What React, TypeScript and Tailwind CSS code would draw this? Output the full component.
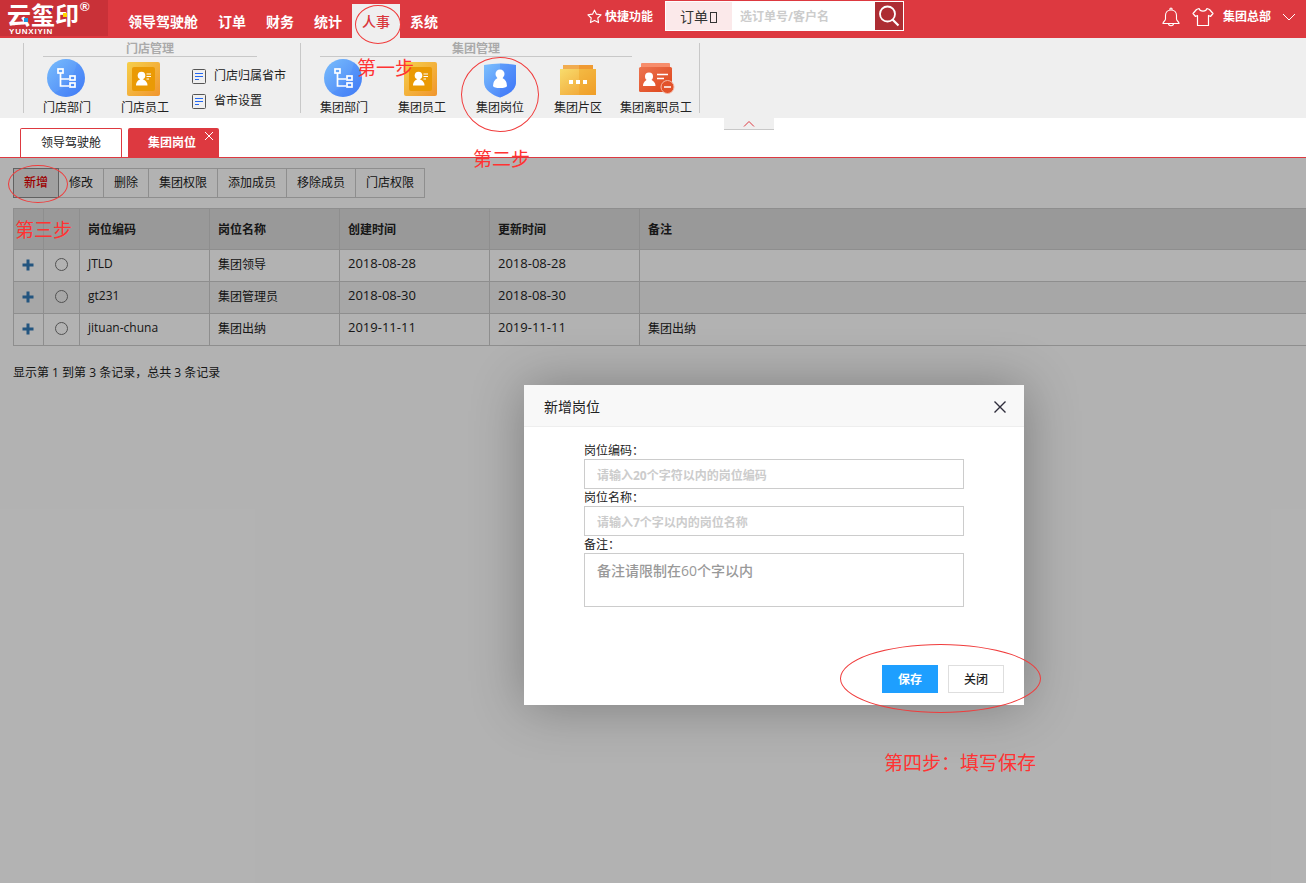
import { useState, type ReactNode } from "react";

const navItems = ["领导驾驶舱", "订单", "财务", "统计", "人事", "系统"];

const tools = [
  "新增",
  "修改",
  "删除",
  "集团权限",
  "添加成员",
  "移除成员",
  "门店权限",
];

const rows = [
  { code: "JTLD", name: "集团领导", created: "2018-08-28", updated: "2018-08-28", remark: "" },
  { code: "gt231", name: "集团管理员", created: "2018-08-30", updated: "2018-08-30", remark: "" },
  { code: "jituan-chuna", name: "集团出纳", created: "2019-11-11", updated: "2019-11-11", remark: "集团出纳" },
];

// hand-drawn tutorial marks that float above the page
const circles = [
  "left-[355px] top-[5px] h-[39px] w-[46px]",
  "left-[461px] top-[57px] h-[75px] w-[78px]",
  "left-[8px] top-[165px] h-[38px] w-[60px]",
  "left-[840px] top-[644px] h-[69px] w-[201px]",
];

const steps = [
  { text: "第一步", place: "left-[357px] top-[54px]" },
  { text: "第二步", place: "left-[473px] top-[145px]" },
  { text: "第三步", place: "left-[15px] top-[216px]" },
  { text: "第四步：填写保存", place: "left-[884px] top-[749px]" },
];

function Logo() {
  return (
    <svg viewBox="0 0 108 36" className="h-9 w-[108px] overflow-visible bg-[#c93138]" role="img" aria-label="云玺印">
      <g fill="#fff" fontFamily="'Noto Sans CJK SC', sans-serif">
        <text x="7" y="24" fontSize="24" fontWeight="700">云玺印</text>
        <text x="9" y="34" fontSize="8" fontWeight="700" fontFamily="'Liberation Sans', sans-serif" className="tracking-widest">
          YUNXIYIN
        </text>
        <text x="80" y="11" fontSize="13" fontWeight="700" fontFamily="'Liberation Sans', sans-serif">®</text>
      </g>
      <rect x="24" y="18" width="4" height="4" fill="#1a9be0" />
      <rect x="49" y="8" width="3" height="3" fill="#7d1f8c" />
      <rect x="63" y="13" width="4" height="4" fill="#ffd400" />
    </svg>
  );
}

function DeptIcon() {
  return (
    <svg viewBox="0 0 40 40" className="size-10" fill="none">
      <defs>
        <linearGradient id="dept" x1="0" y1="0" x2="1" y2="1">
          <stop offset="0" stopColor="#79bdfc" />
          <stop offset="1" stopColor="#437df6" />
        </linearGradient>
      </defs>
      <circle cx="20" cy="20" r="19" fill="url(#dept)" />
      <path d="M31 4.500A19 19 0 0 1 8 35C20 30 28 19 31 4.500Z" fill="#2f6bf5" opacity=".15" />
      <g stroke="#fff" strokeWidth="1.700">
        <rect x="12" y="11" width="5" height="4" />
        <path d="M14.500 15v13H23M14.500 21H23" />
        <rect x="24" y="18" width="5" height="4" />
        <rect x="24" y="25" width="5" height="4" />
      </g>
    </svg>
  );
}

function StaffIcon() {
  return (
    <svg viewBox="0 0 40 40" className="size-10">
      <defs>
        <linearGradient id="staff" x1="0" y1="0" x2="1" y2="1">
          <stop offset="0" stopColor="#f6cf4a" />
          <stop offset="1" stopColor="#f0952e" />
        </linearGradient>
      </defs>
      <rect x="3" y="4" width="33" height="34" rx="2" fill="url(#staff)" />
      <rect x="8" y="9" width="23" height="24" rx="2" fill="#ea9a05" />
      <circle cx="17.500" cy="17.500" r="3.800" fill="#fff" />
      <path d="M12 27.500c0-4 2.500-5.500 5.500-7 3 1.500 6 3 6 7Z" fill="#fff" />
      <path d="M22.500 16H27M22.500 18.500H27M22.500 21H25" stroke="#fff" />
    </svg>
  );
}

function PostIcon() {
  return (
    <svg viewBox="-1 0 40 40" className="size-10">
      <defs>
        <linearGradient id="post" x1="0" y1="0" x2="1" y2="1">
          <stop offset="0" stopColor="#7cc0fd" />
          <stop offset="1" stopColor="#3f76f8" />
        </linearGradient>
      </defs>
      <path d="M4 7Q20 4 36 7V24C36 32 28 37 20 39.500 12 37 4 32 4 24Z" fill="url(#post)" />
      <path d="M20 5.500Q29 5.500 36 7V24C36 32 28 37 20 39.500Z" fill="#3b74f7" opacity=".3" />
      <circle cx="20" cy="16" r="4.500" fill="#fff" />
      <path d="M13 28q0-5.500 4.500-8h5q4.500 2.500 4.500 8-1 2-7 2t-7-2Z" fill="#fff" />
    </svg>
  );
}

function AreaIcon() {
  return (
    <svg viewBox="-1 0 40 40" className="size-10">
      <defs>
        <linearGradient id="area" x1="0" y1="0" x2="1" y2="1">
          <stop offset="0" stopColor="#f8dc6c" />
          <stop offset="1" stopColor="#f09c2c" />
        </linearGradient>
      </defs>
      <path d="M5 7H35V12H5Z" fill="#f1ac50" />
      <path d="M21 7H35V12H21Z" fill="#f09b33" />
      <path d="M2 11H38V37H2Z" fill="url(#area)" />
      <path d="M21 11H38V37H21Z" fill="#f0a020" opacity=".4" />
      <path d="M11 22h4v4h-4zM18 22h4v4h-4zM25 22h4v4h-4z" fill="#fff" />
    </svg>
  );
}

function LeftStaffIcon() {
  return (
    <svg viewBox="-1 0 40 40" className="size-10">
      <defs>
        <linearGradient id="leaver" x1="0" y1="0" x2="1" y2="1">
          <stop offset="0" stopColor="#ec7450" />
          <stop offset="1" stopColor="#de4318" />
        </linearGradient>
      </defs>
      <rect x="5" y="5" width="29" height="8" rx="1" fill="#f78d6b" />
      <rect x="3" y="9" width="33" height="25" rx="1.500" fill="url(#leaver)" />
      <circle cx="13" cy="18.500" r="4" fill="#fff" />
      <path d="M7 28c0-4 3-6 6-7.500 3 1.500 6.500 3.500 6.500 7.500Z" fill="#fff" />
      <path d="M21 16.500H32M21 20.500H28" stroke="#fff" strokeWidth="1.500" />
      <circle cx="31.500" cy="29" r="6.500" fill="#e2522a" stroke="#f5b8a5" />
      <path d="M28 29H35" stroke="#fff" strokeWidth="1.500" />
    </svg>
  );
}

function ListIcon() {
  return (
    <svg viewBox="0 0 14 15" className="h-[15px] w-[14px]" fill="none">
      <rect x=".5" y=".5" width="13" height="14" rx="1" stroke="#555" />
      <path d="M3 4.500H11M3 7.500H11M3 10.500H7" stroke="#2468f2" />
    </svg>
  );
}

function RibbonGroup({
  title,
  rule,
  children,
}: {
  title: string;
  rule: string;
  children: ReactNode;
}) {
  return (
    <section className="h-[70px] border-l border-[#c8c8c8]">
      <h2 className={`ml-[19px] h-[14px] border-b border-[#c8c8c8] text-center text-xs leading-[12px] font-bold text-[#aaa] ${rule}`}>
        {title}
      </h2>
      <div className="ml-1 flex">{children}</div>
    </section>
  );
}

function RibbonItem({ label, icon }: { label: string; icon: ReactNode }) {
  return (
    <a href="#" className="flex w-[78px] flex-col items-center whitespace-nowrap">
      <span className="mt-px pr-[2px]">{icon}</span>
      <span className="leading-5">{label}</span>
    </a>
  );
}

function Header() {
  return (
    <header className="flex h-[38px] bg-[#dd3940] font-bold text-white">
      <Logo />

      <nav className="ml-[10px] flex pt-1 text-sm">
        {navItems.map((item) => (
          <a
            key={item}
            href="#"
            className={`px-[10px] leading-9 whitespace-nowrap ${
              item === "人事" ? "bg-[#efefef] font-medium text-[#d9363c]" : ""
            }`}
          >
            {item}
          </a>
        ))}
      </nav>

      <button className="ml-[139px] flex h-[33px] items-center gap-[3px] whitespace-nowrap">
        <svg viewBox="0 0 16 16" className="size-[15px]" fill="none" stroke="#fff" strokeWidth="1.200" strokeLinejoin="round">
          <path d="M8 1.200 10.100 5.500 15 6.200 11.500 9.600 12.300 14.500 8 12.200 3.700 14.500 4.500 9.600 1 6.200 5.900 5.500Z" />
        </svg>
        快捷功能
      </button>

      <form className="mt-px ml-3 flex h-[30px] w-[239px] border border-white font-normal" onSubmit={(e) => e.preventDefault()}>
        <label className="flex w-[66px] items-center bg-[#fbe9ea] pt-[2px] pl-[14px] text-[#333]">
          <select aria-label="搜索类型" className="w-[30px] appearance-none bg-transparent text-sm outline-none">
            <option>订单</option>
          </select>
          <span className="h-[11px] w-[7px] border border-[#333]" />
        </label>
        <input
          aria-label="搜索"
          placeholder="选订单号/客户名"
          className="min-w-0 flex-1 bg-white px-2 pt-[2px] text-xs text-[#333] outline-none placeholder:font-bold placeholder:text-[#ccc]"
        />
        <button aria-label="查询" className="flex w-7 items-center justify-center bg-[#ad2d33]">
          <svg viewBox="0 0 24 24" className="size-6" fill="none" stroke="#fff" strokeWidth="1.800">
            <circle cx="10.500" cy="10" r="7.500" />
            <path d="m15.500 15.500 6 6" strokeWidth="2.200" />
          </svg>
        </button>
      </form>

      <div className="mr-[10px] ml-auto flex h-[33px] items-center">
        <button aria-label="消息">
          <svg viewBox="0 0 18 20" className="h-5 w-[18px]" fill="none" stroke="#fff" strokeWidth="1.100">
            <path d="M8 3a1.200 1.200 0 1 1 2 0M9 3C5.500 3 3.500 5.500 3.500 8.500V12C3.500 14 1 14.500 1 16.500H17C17 14.500 14.500 14 14.500 12V8.500C14.500 5.500 12.500 3 9 3ZM6.500 16.500C6.500 19.500 11.500 19.500 11.500 16.500" />
          </svg>
        </button>
        <button aria-label="换肤" className="ml-3">
          <svg viewBox="0 0 22 20" className="h-5 w-[22px]" fill="none" stroke="#fff" strokeWidth="1.200" strokeLinejoin="round">
            <path d="M7 1.500C8 5 14 5 15 1.500L17.500 2.500 21 6.500 18.500 9.500 16.500 8.500V18.500H5.500V8.500L3.500 9.500 1 6.500 4.500 2.500Z" />
          </svg>
        </button>
        <button className="ml-[9px] flex items-center gap-[11px] whitespace-nowrap">
          集团总部
          <svg viewBox="0 0 14 8" className="h-2 w-[14px]" fill="none" stroke="#fff">
            <path d="m1 1 6 6 6-6" />
          </svg>
        </button>
      </div>
    </header>
  );
}

function Ribbon() {
  return (
    <div className="relative flex h-20 bg-[#efefef] pt-[5px] pl-[23px]">
      <div className="w-[277px]">
        <RibbonGroup title="门店管理" rule="w-[214px]">
          <RibbonItem label="门店部门" icon={<DeptIcon />} />
          <RibbonItem label="门店员工" icon={<StaffIcon />} />
          <div className="ml-2 flex flex-col gap-[5px] pt-[9px] leading-5 whitespace-nowrap">
            <a href="#" className="flex items-center gap-2"><ListIcon />门店归属省市</a>
            <a href="#" className="flex items-center gap-2"><ListIcon />省市设置</a>
          </div>
        </RibbonGroup>
      </div>
      <div className="h-[70px] w-[400px] border-r border-[#c8c8c8]">
        <RibbonGroup title="集团管理" rule="w-[312px]">
          <RibbonItem label="集团部门" icon={<DeptIcon />} />
          <RibbonItem label="集团员工" icon={<StaffIcon />} />
          <RibbonItem label="集团岗位" icon={<PostIcon />} />
          <RibbonItem label="集团片区" icon={<AreaIcon />} />
          <RibbonItem label="集团离职员工" icon={<LeftStaffIcon />} />
        </RibbonGroup>
      </div>
      <button
        aria-label="收起"
        className="absolute top-full left-[724px] flex h-3 w-[50px] items-center justify-center border-b border-[#c8c8c8] bg-[#efefef]"
      >
        <svg viewBox="0 0 12 6" className="h-[6px] w-3" fill="none" stroke="#dd3940">
          <path d="m1 5.500 5-5 5 5" />
        </svg>
      </button>
    </div>
  );
}

function PostTable() {
  const [picked, setPicked] = useState("");
  const cell = "border border-[#ccc] px-2 last:border-r-0";

  return (
    <table className="mt-[10px] w-full table-fixed border-collapse text-left">
      <colgroup>
        <col className="w-[30px]" />
        <col className="w-[36px]" />
        <col className="w-[130px]" />
        <col className="w-[130px]" />
        <col className="w-[150px]" />
        <col className="w-[150px]" />
        <col />
      </colgroup>
      <thead>
        <tr className="h-[41px] bg-[#dcdcdc]">
          {["", "", "岗位编码", "岗位名称", "创建时间", "更新时间", "备注"].map((head, i) => (
            <th key={i} className={`${cell} pt-[2px] font-bold`}>{head}</th>
          ))}
        </tr>
      </thead>
      <tbody>
        {rows.map((row) => (
          <tr key={row.code} className="h-8 even:bg-[#efefef]">
            <td className={cell}>
              <button aria-label="展开" className="flex pb-px">
                <svg viewBox="0 0 12 12" className="size-3">
                  <path d="M4.500 0.500h3v4h4v3h-4v4h-3v-4h-4v-3h4Z" fill="#337ab7" />
                </svg>
              </button>
            </td>
            <td className={`${cell} pb-[2px]`}>
              <input
                type="radio"
                name="post"
                aria-label={row.name}
                checked={picked === row.code}
                onChange={() => setPicked(row.code)}
                className="mx-[3px] block size-[13px] appearance-none rounded-full border border-[#767676] checked:border-4"
              />
            </td>
            <td className={`${cell} pb-[3px]`}>{row.code}</td>
            <td className={`${cell} pb-[2px]`}>{row.name}</td>
            <td className={`${cell} pb-[5px] text-[13px] leading-5`}>{row.created}</td>
            <td className={`${cell} pb-[5px] text-[13px] leading-5`}>{row.updated}</td>
            <td className={`${cell} pb-[2px]`}>{row.remark}</td>
          </tr>
        ))}
      </tbody>
    </table>
  );
}

function PostDialog() {
  const field =
    "block w-full border border-[#ccc] px-3 outline-none";

  return (
    <div
      role="dialog"
      aria-label="新增岗位"
      className="absolute top-[227px] left-[524px] w-[500px] bg-white shadow-[1px_1px_50px_rgba(0,0,0,0.3)]"
    >
      <div className="flex h-[42px] items-center justify-between border-b border-[#eee] bg-[#f8f8f8] pt-[2px] pr-[18px] pl-5">
        <h3 className="text-sm">新增岗位</h3>
        <button aria-label="关闭窗口">
          <svg viewBox="0 0 12 12" className="size-3" fill="none" stroke="#2e2d3c" strokeWidth="1.400">
            <path d="m.5.5 11 11M11.500.5l-11 11" />
          </svg>
        </button>
      </div>

      <form className="px-[60px] pt-[15px] leading-[17px]" onSubmit={(e) => e.preventDefault()}>
        <label htmlFor="code" className="block">岗位编码：</label>
        <input
          id="code"
          placeholder="请输入20个字符以内的岗位编码"
          className={`${field} h-[30px] pt-[2px] placeholder:font-bold placeholder:text-[#ccc]`}
        />
        <label htmlFor="name" className="block">岗位名称：</label>
        <input
          id="name"
          placeholder="请输入7个字以内的岗位名称"
          className={`${field} h-[30px] pt-[2px] placeholder:font-bold placeholder:text-[#ccc]`}
        />
        <label htmlFor="remark" className="block">备注：</label>
        <textarea
          id="remark"
          placeholder="备注请限制在60个字以内"
          className={`${field} h-[54px] resize-none pt-[7px] text-sm placeholder:font-medium placeholder:text-[#999]`}
        />
      </form>

      <div className="flex justify-end gap-[10px] px-5 pt-[58px] pb-3">
        <button className="h-7 w-14 bg-[#1e9fff] pt-[2px] font-bold text-white">保存</button>
        <button className="h-7 w-14 border border-[#dedede] pt-[2px] font-medium">关闭</button>
      </div>
    </div>
  );
}

export default function App() {
  return (
    <div className="relative flex min-h-screen flex-col overflow-hidden bg-white font-['Open_Sans','Noto_Sans_CJK_SC',sans-serif] text-xs text-[#222]">
      <Header />
      <Ribbon />

      <div className="flex h-10 items-end gap-[6px] border-b border-[#dd3940] pl-5">
        <button className="h-[29px] rounded-t-xs border border-b-0 border-[#dd3940] px-5">
          领导驾驶舱
        </button>
        <div className="flex h-[29px] rounded-t-xs bg-[#dd3940] pr-[3px] pl-5 font-bold text-white">
          <button>集团岗位</button>
          <button aria-label="关闭标签" className="mt-[2px] ml-[6px] h-3 w-[14px]">
            <svg viewBox="0 0 10 10" className="mx-auto size-[10px]" fill="none" stroke="#fff">
              <path d="m1 1 8 8M9 1 1 9" />
            </svg>
          </button>
        </div>
      </div>

      <main className="relative flex-1">
        <div className="pt-[10px] pl-[13px]">
          <div className="flex">
            {tools.map((tool) => (
              <button
                key={tool}
                className={`-mr-px h-[30px] border px-[10px] ${
                  tool === "新增"
                    ? "z-1 border-[#8c8c8c] bg-[#e6e6e6] font-medium text-[#e00000]"
                    : "border-[#ccc]"
                }`}
              >
                {tool}
              </button>
            ))}
          </div>
          <PostTable />
          <p className="mt-[18px] leading-[18px]">显示第 1 到第 3 条记录，总共 3 条记录</p>
        </div>
        <div className="absolute inset-0 z-10 bg-black/30" />
        <div className="absolute inset-0 z-20">
          <PostDialog />
        </div>
      </main>

      <div className="pointer-events-none absolute inset-0 z-30 text-[19px] leading-7 text-[#ff3333]">
        {circles.map((circle) => (
          <div key={circle} className={`absolute rounded-[50%] border border-[#f03c3c] ${circle}`} />
        ))}
        {steps.map((step) => (
          <span key={step.text} className={`absolute whitespace-nowrap ${step.place}`}>
            {step.text}
          </span>
        ))}
      </div>
    </div>
  );
}
